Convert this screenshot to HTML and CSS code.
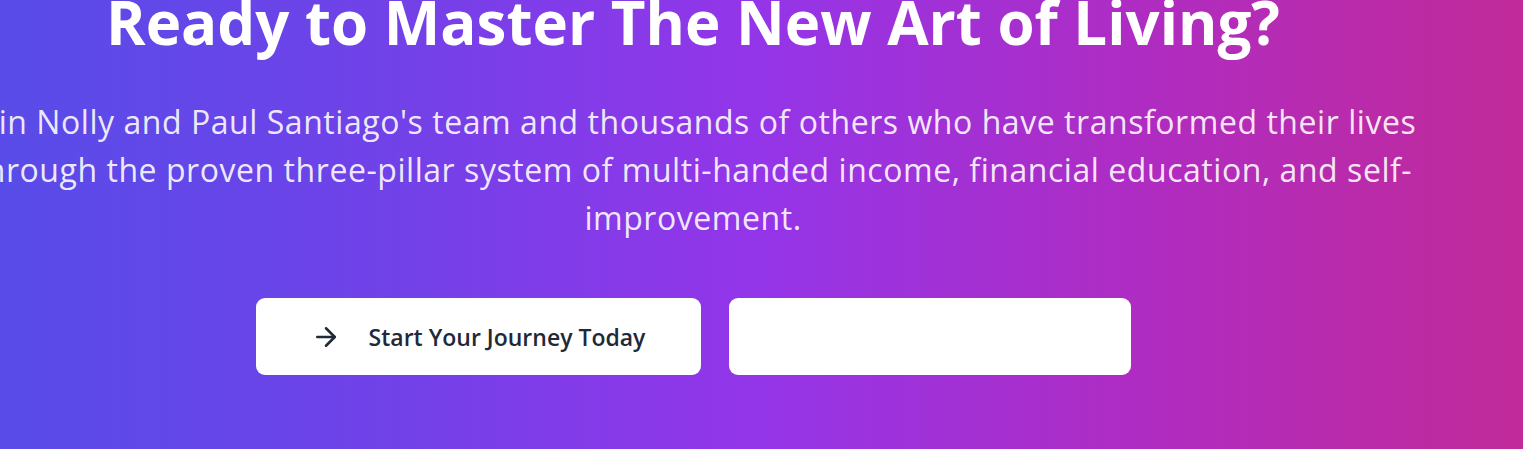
FILE: index.html
```html
<!DOCTYPE html>
<html lang="en">
<head>
<meta charset="utf-8">
<title>Ready to Master The New Art of Living?</title>
<link rel="stylesheet" href="styles.css">
</head>
<body>
<section class="cta">
  <div class="cta-inner">
    <h1 class="cta-title">Ready to Master The New Art of Living?</h1>
    <p class="cta-text">Join Nolly and Paul Santiago's team and thousands of others who have transformed their lives through the proven three-pillar system of multi-handed income, financial education, and self-improvement.</p>
    <div class="cta-actions">
      <a class="btn btn-primary" href="#">
        <svg class="btn-icon" viewBox="0 0 24 24" fill="none" stroke="currentColor" stroke-width="2" stroke-linecap="round" stroke-linejoin="round" aria-hidden="true"><path d="M5 12h14"/><path d="m12 5 7 7-7 7"/></svg>
        <span>Start Your Journey Today</span>
      </a>
      <a class="btn btn-secondary" href="#"></a>
    </div>
  </div>
</section>
</body>
</html>
```

FILE: styles.css
```css
html, body {
  margin: 0;
  padding: 0;
  height: 100%;
  overflow: hidden;
}

body {
  font-family: "Open Sans", "Noto Sans", "Liberation Sans", sans-serif;
}

.cta {
  height: 449px;
  background: linear-gradient(to right, #584ce8 0%, #7042e8 25%, #9435e8 50%, #af2cc2 75%, #c12a99 100%);
  overflow: hidden;
}

.cta-inner {
  width: 1500px;
  margin-left: -57px;
  text-align: center;
  display: flex;
  flex-direction: column;
  align-items: center;
}

.cta-title {
  margin: -14px 0 0;
  font-size: 60px;
  line-height: 72px;
  font-weight: 700;
  color: #ffffff;
}

.cta-text {
  width: 1480px;
  margin: 40px 0 0;
  font-size: 32px;
  line-height: 48px;
  letter-spacing: 0.55px;
  color: rgba(255, 255, 255, 0.9);
}

.cta-actions {
  margin-top: 56px;
  display: flex;
  gap: 28px;
}

.btn {
  height: 77px;
  box-sizing: border-box;
  border-radius: 9px;
  background: #ffffff;
  display: flex;
  align-items: center;
  justify-content: center;
  text-decoration: none;
}

.btn-primary {
  width: 445px;
  gap: 28px;
  color: #1f2937;
  font-size: 23px;
  font-weight: 600;
}

.btn-secondary {
  width: 402px;
}

.btn-icon {
  width: 30px;
  height: 30px;
  flex: none;
}
```
